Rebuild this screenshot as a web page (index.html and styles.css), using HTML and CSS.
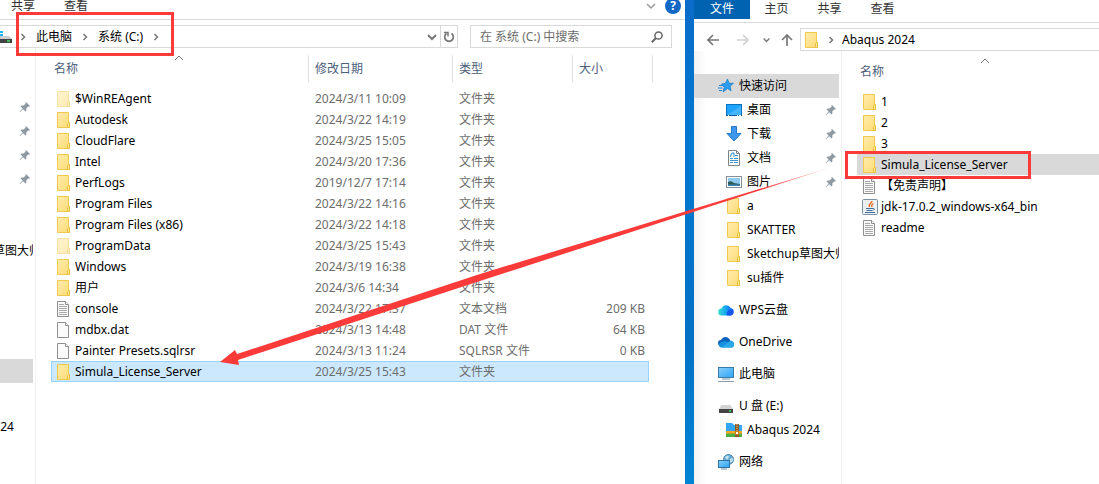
FILE: index.html
```
<!DOCTYPE html>
<html lang="zh-CN">

<head>
  <meta charset="utf-8">
  <title>系统 (C:)</title>
  <link rel="stylesheet" href="styles.css">
</head>

<body>
  <!-- Icon sprite -->
  <svg class="sprite" aria-hidden="true">
    <defs>
      <linearGradient id="gFolder" x1="0" y1="0" x2="1" y2="1">
        <stop offset="0" stop-color="#ffebad" />
        <stop offset="1" stop-color="#fedc74" />
      </linearGradient>
      <linearGradient id="gScreen" x1="0" y1="0" x2="1" y2="1">
        <stop offset="0" stop-color="#8ad0fb" />
        <stop offset="1" stop-color="#2ba3f5" />
      </linearGradient>
      <linearGradient id="gWps" x1="0" y1="0" x2="1" y2="0">
        <stop offset="0" stop-color="#35e0c8" />
        <stop offset="0.5" stop-color="#14a5f5" />
        <stop offset="1" stop-color="#1450f0" />
      </linearGradient>
    </defs>
    <symbol id="folder" viewBox="0 0 16 16">
      <path d="M1.500 .5h11v10h1v5h-12z" fill="url(#gFolder)" stroke="#efca4f" />
      <path d="M11.500 15.500v-4l1-1h1v5z" fill="#ffe698" stroke="#e8be3c" />
    </symbol>
    <symbol id="text" viewBox="0 0 16 16">
      <path d="M1.500 .5h8l3 3v12h-11z" fill="#fafafa" stroke="#8f8f8f" />
      <path d="M9.500 .5v3h3" fill="#fff" stroke="#8f8f8f" />
      <path d="M3 3.500h5M3 5.500h8M3 7.500h8M3 9.500h8M3 11.500h8M3 13.500h8" stroke="#a8a8a8" />
    </symbol>
    <symbol id="file" viewBox="0 0 16 16">
      <path d="M1.500 .5h8l3 3v12h-11z" fill="#fafafa" stroke="#8f8f8f" />
      <path d="M9.500 .5v3h3" fill="#fff" stroke="#8f8f8f" />
    </symbol>
    <symbol id="java" viewBox="0 0 16 16">
      <rect x=".5" y=".5" width="15" height="15" rx="1" fill="#eef1f4" stroke="#7c93a6" />
      <path d="M10 2c0 2-4 2.500-2.500 6M11.500 4.500c-2.500 1-2 2-1.500 3.500" fill="none" stroke="#ee6a22" stroke-width="1.300" />
      <path d="M4 9.500h7M4.500 11.500h6M11 9.500q3 0 0 2M3 13.500h10" fill="none" stroke="#3d6f99" />
    </symbol>
    <symbol id="star" viewBox="0 0 16 16">
      <path d="M9.500 1l1.600 4.200 4.400.1-3.400 2.900 1 4.600-3.600-2.300L5 14l1.200-4.700L3.500 6l3.800-.6z" fill="#2a9df0" stroke="#1479c4" stroke-width=".7" />
      <path d="M1 7.500h4M0 10h4.500M1 12.500h3" stroke="#1b86d6" />
    </symbol>
    <symbol id="desktop" viewBox="0 0 16 16">
      <rect x=".5" y="2.500" width="15" height="11" fill="#1ea3fb" stroke="#0b72bd" />
      <path d="M1 13L15 4v9z" fill="#43b4fd" />
      <path d="M0 13.500h16" stroke="#0a5c9c" />
      <path d="M2 13.500h1M11 13.500h1M13 13.500h2" stroke="#fff" />
    </symbol>
    <symbol id="download" viewBox="0 0 16 16">
      <path d="M5.500 .5h5v7h4.500l-7 7.500-7-7.500h4.500z" fill="#3d98ee" stroke="#2579cb" />
    </symbol>
    <symbol id="docs" viewBox="0 0 16 16">
      <path d="M2.500 .5h8l3 3v12h-11z" fill="#fff" stroke="#7d8489" />
      <path d="M10.500 .5v3h3" fill="none" stroke="#7d8489" />
      <path d="M4 7l2-4h2v4" fill="none" stroke="#2c88cd" />
      <path d="M9 5.500h3M4 8.500h3M8 8.500h4M4 10.500h8M4 12.500h3M8 12.500h4" stroke="#3c93d2" />
    </symbol>
    <symbol id="pictures" viewBox="0 0 16 16">
      <rect x=".5" y="2.500" width="15" height="11" fill="#fff" stroke="#87909a" />
      <path d="M2 4h12v8H2z" fill="#8ec9f2" />
      <path d="M2 8q3-2 6 1l6 1v2H2z" fill="#2f5d58" />
      <path d="M2 10.500h12V12H2z" fill="#3c83b4" />
    </symbol>
    <symbol id="pin" viewBox="0 0 12 12">
      <path d="M7 1l4 4-1 .6-.8-.2-2 2.200.2 2.200-.9.700-2.300-2.300L1 11.300l-.4-.4L3.700 7.500 1.500 5.300l.8-.8 2.200.1 2.100-1.900-.2-1z" fill="#8d99a3" />
    </symbol>
    <symbol id="wps" viewBox="0 0 16 16">
      <path d="M4 13.500a3.500 3.500 0 01-.5-7A5 5 0 0112.700 6a3.800 3.800 0 01-.2 7.500z" fill="url(#gWps)" />
      <path d="M9 13.500c-1-3 1-6 4-6 3 1 3 6-.5 6z" fill="#1459ee" />
    </symbol>
    <symbol id="onedrive" viewBox="0 0 16 16">
      <path d="M3 12a3 3 0 010-6C5 2 10 2 12 6l1 5z" fill="#0c62b8" />
      <path d="M3 13.500a2.700 2.700 0 01-.8-5L6 7l8 2a2.300 2.300 0 010 4.500z" fill="#1490df" />
      <path d="M3 13.500L9.500 9l3-2.500c5 0 4.500 7 1 7z" fill="#28a8ea" />
    </symbol>
    <symbol id="pc" viewBox="0 0 16 16">
      <rect x=".5" y="1.500" width="15" height="10" fill="url(#gScreen)" stroke="#3c7ba6" />
      <path d="M4 13h8" stroke="#7590a1" />
      <path d="M0 15.500h16" stroke="#8b9ca8" />
    </symbol>
    <symbol id="drive" viewBox="0 0 16 16">
      <path d="M3.500 7h9l2.500 4H1z" fill="#d3d3d3" />
      <path d="M1 11h14v4H1z" fill="#444" />
      <path d="M11 13h2" stroke="#3fe05f" stroke-width="1.500" />
    </symbol>
    <symbol id="zip" viewBox="0 0 16 16">
      <path d="M0 1h6l2 2h8v8H0z" fill="#35a7f2" />
      <path d="M0 9h16v3H0z" fill="#f6a623" />
      <path d="M0 11.500h16V15H0z" fill="#52ae43" />
      <path d="M9 2h4v13H9z" fill="#8b5a2b" />
      <path d="M11 2v7" stroke="#f7d98b" stroke-dasharray="1 1" />
      <rect x="9.500" y="9.500" width="3" height="3" fill="#fff" stroke="#c87d10" />
    </symbol>
    <symbol id="network" viewBox="0 0 16 16">
      <circle cx="10.500" cy="5.500" r="5" fill="#69acd2" stroke="#4c8ab0" />
      <path d="M7 3q3-3 4 0l-2 3zM12 5l3-1v3l-3 2z" fill="#c4e1ef" />
      <rect x=".5" y="6.500" width="11" height="7" fill="url(#gScreen)" stroke="#2f72a4" />
      <path d="M3 15h6" stroke="#6f8ea3" />
    </symbol>
    <symbol id="right" viewBox="0 0 6 8">
      <path d="M1.500 1l3 3-3 3" fill="none" stroke="#777" stroke-width="1.500" />
    </symbol>
    <symbol id="down" viewBox="0 0 10 8">
      <path d="M1 2l4 4 4-4" fill="none" stroke="currentColor" stroke-width="2" />
    </symbol>
    <symbol id="sort" viewBox="0 0 10 6">
      <path d="M1 5l4-4 4 4" fill="none" stroke="#777" />
    </symbol>
    <symbol id="back" viewBox="0 0 12 12">
      <path d="M12 6H1M6 1L1 6l5 5" fill="none" stroke="currentColor" stroke-width="1.700" />
    </symbol>
  </svg>

  <main class="desktop">
    <!-- C: drive window -->
    <section class="window window-c">
      <div class="tabs">
        <button class="tab">共享</button>
        <button class="tab">查看</button>
        <svg class="expand" width="10" height="8" viewBox="0 0 10 8">
          <path d="M1 2l4 4 4-4" fill="none" stroke="#9a9a9a" stroke-width="1.500" />
        </svg>
        <button class="help" aria-label="?">?</button>
      </div>

      <div class="toolbar">
        <div class="address">
          <svg class="address-drive" width="12" height="16" viewBox="0 0 12 16">
            <path d="M0 2h3v5H0z" fill="#19b5f1" />
            <path d="M0 4.500h3" stroke="#fff" />
            <path d="M0 7h9l3 3H0z" fill="#c9cdd0" />
            <path d="M0 10h12v4H0z" fill="#444" />
            <path d="M7 12h3" stroke="#3fe05f" stroke-width="1.500" />
          </svg>
          <nav class="crumbs marked">
            <svg width="6" height="8"><use href="#right" /></svg>
            <a href="#">此电脑</a>
            <svg width="6" height="8"><use href="#right" /></svg>
            <a href="#">系统 (C:)</a>
            <svg width="6" height="8"><use href="#right" /></svg>
          </nav>
          <button class="address-btn history"><svg width="10" height="8"><use href="#down" /></svg></button>
          <button class="address-btn refresh">
            <svg width="12" height="12" viewBox="0 0 12 12">
              <path d="M8.500 2.500a4.300 4.300 0 11-5 0" fill="none" stroke="#777" stroke-width="1.700" />
              <path d="M1 1.500H5V5.500" fill="none" stroke="#777" stroke-width="1.500" />
            </svg>
          </button>
        </div>
        <div class="search">
          <input type="text" placeholder="在 系统 (C:) 中搜索" aria-label="在 系统 (C:) 中搜索">
          <svg width="12" height="12" viewBox="0 0 12 12">
            <circle cx="7.500" cy="4.500" r="3.600" fill="none" stroke="#666" stroke-width="1.500" />
            <path d="M5 7L.8 11.200" stroke="#666" stroke-width="2" />
          </svg>
        </div>
      </div>

      <div class="content">
        <div class="side-cut">
          <ul class="nav">
            <li class="nav-item"></li>
            <li class="nav-item sub"><svg class="pin"><use href="#pin" /></svg></li>
            <li class="nav-item sub"><svg class="pin"><use href="#pin" /></svg></li>
            <li class="nav-item sub"><svg class="pin"><use href="#pin" /></svg></li>
            <li class="nav-item sub"><svg class="pin"><use href="#pin" /></svg></li>
            <li class="nav-item sub"></li>
            <li class="nav-item sub"></li>
            <li class="nav-item sub"><svg class="icon"><use href="#folder" /></svg><span>Sketchup草图大师</span></li>
            <li class="nav-item sub"></li>
            <li class="nav-item group"></li>
            <li class="nav-item group"></li>
            <li class="nav-item group active"></li>
            <li class="nav-item group"></li>
            <li class="nav-item sub"><svg class="icon"><use href="#zip" /></svg><span>Abaqus 2024</span></li>
          </ul>
        </div>

        <div class="list">
          <svg class="sort" width="10" height="6"><use href="#sort" /></svg>
          <table class="files">
            <thead>
              <tr>
                <th class="col-name"><div>名称</div></th>
                <th class="col-date"><div>修改日期</div></th>
                <th class="col-type"><div>类型</div></th>
                <th class="col-size"><div>大小</div></th>
              </tr>
            </thead>
            <tbody>
              <tr>
                <td><div class="name"><svg class="icon faded"><use href="#folder" /></svg>$WinREAgent</div></td>
                <td>2024/3/11 10:09</td><td>文件夹</td><td></td>
              </tr>
              <tr>
                <td><div class="name"><svg class="icon"><use href="#folder" /></svg>Autodesk</div></td>
                <td>2024/3/22 14:19</td><td>文件夹</td><td></td>
              </tr>
              <tr>
                <td><div class="name"><svg class="icon"><use href="#folder" /></svg>CloudFlare</div></td>
                <td>2024/3/25 15:05</td><td>文件夹</td><td></td>
              </tr>
              <tr>
                <td><div class="name"><svg class="icon"><use href="#folder" /></svg>Intel</div></td>
                <td>2024/3/20 17:36</td><td>文件夹</td><td></td>
              </tr>
              <tr>
                <td><div class="name"><svg class="icon"><use href="#folder" /></svg>PerfLogs</div></td>
                <td>2019/12/7 17:14</td><td>文件夹</td><td></td>
              </tr>
              <tr>
                <td><div class="name"><svg class="icon"><use href="#folder" /></svg>Program Files</div></td>
                <td>2024/3/22 14:16</td><td>文件夹</td><td></td>
              </tr>
              <tr>
                <td><div class="name"><svg class="icon"><use href="#folder" /></svg>Program Files (x86)</div></td>
                <td>2024/3/22 14:18</td><td>文件夹</td><td></td>
              </tr>
              <tr>
                <td><div class="name"><svg class="icon faded"><use href="#folder" /></svg>ProgramData</div></td>
                <td>2024/3/25 15:43</td><td>文件夹</td><td></td>
              </tr>
              <tr>
                <td><div class="name"><svg class="icon"><use href="#folder" /></svg>Windows</div></td>
                <td>2024/3/19 16:38</td><td>文件夹</td><td></td>
              </tr>
              <tr>
                <td><div class="name"><svg class="icon"><use href="#folder" /></svg>用户</div></td>
                <td>2024/3/6 14:34</td><td>文件夹</td><td></td>
              </tr>
              <tr>
                <td><div class="name"><svg class="icon"><use href="#text" /></svg>console</div></td>
                <td>2024/3/22 17:37</td><td>文本文档</td><td>209 KB</td>
              </tr>
              <tr>
                <td><div class="name"><svg class="icon"><use href="#file" /></svg>mdbx.dat</div></td>
                <td>2024/3/13 14:48</td><td>DAT 文件</td><td>64 KB</td>
              </tr>
              <tr>
                <td><div class="name"><svg class="icon"><use href="#file" /></svg>Painter Presets.sqlrsr</div></td>
                <td>2024/3/13 11:24</td><td>SQLRSR 文件</td><td>0 KB</td>
              </tr>
              <tr class="selected">
                <td><div class="name"><svg class="icon"><use href="#folder" /></svg>Simula_License_Server</div></td>
                <td>2024/3/25 15:43</td><td>文件夹</td><td></td>
              </tr>
            </tbody>
          </table>
        </div>
      </div>
    </section>

    <!-- Abaqus window -->
    <section class="window window-abaqus">
      <div class="tabs">
        <button class="tab tab-file">文件</button>
        <button class="tab">主页</button>
        <button class="tab">共享</button>
        <button class="tab">查看</button>
      </div>

      <div class="toolbar">
        <div class="arrows">
          <button class="arrow" aria-label="后退"><svg width="12" height="12"><use href="#back" /></svg></button>
          <button class="arrow forward" aria-label="前进" disabled><svg width="12" height="12"><use href="#back" /></svg></button>
          <button class="arrow recent" aria-label="最近"><svg width="7" height="6"><use href="#down" /></svg></button>
          <button class="arrow up" aria-label="向上"><svg width="12" height="12"><use href="#back" /></svg></button>
        </div>
        <div class="address">
          <svg class="icon"><use href="#folder" /></svg>
          <svg width="6" height="8"><use href="#right" /></svg>
          <a href="#">Abaqus 2024</a>
        </div>
      </div>

      <div class="content">
        <ul class="nav">
          <li class="nav-item active"><svg class="icon"><use href="#star" /></svg><span>快速访问</span></li>
          <li class="nav-item sub"><svg class="icon"><use href="#desktop" /></svg><span>桌面</span><svg class="pin"><use href="#pin" /></svg></li>
          <li class="nav-item sub"><svg class="icon"><use href="#download" /></svg><span>下载</span><svg class="pin"><use href="#pin" /></svg></li>
          <li class="nav-item sub"><svg class="icon"><use href="#docs" /></svg><span>文档</span><svg class="pin"><use href="#pin" /></svg></li>
          <li class="nav-item sub"><svg class="icon"><use href="#pictures" /></svg><span>图片</span><svg class="pin"><use href="#pin" /></svg></li>
          <li class="nav-item sub"><svg class="icon"><use href="#folder" /></svg><span>a</span></li>
          <li class="nav-item sub"><svg class="icon"><use href="#folder" /></svg><span>SKATTER</span></li>
          <li class="nav-item sub"><svg class="icon"><use href="#folder" /></svg><span>Sketchup草图大师</span></li>
          <li class="nav-item sub"><svg class="icon"><use href="#folder" /></svg><span>su插件</span></li>
          <li class="nav-item group"><svg class="icon"><use href="#wps" /></svg><span>WPS云盘</span></li>
          <li class="nav-item group"><svg class="icon"><use href="#onedrive" /></svg><span>OneDrive</span></li>
          <li class="nav-item group"><svg class="icon"><use href="#pc" /></svg><span>此电脑</span></li>
          <li class="nav-item group"><svg class="icon"><use href="#drive" /></svg><span>U 盘 (E:)</span></li>
          <li class="nav-item sub"><svg class="icon"><use href="#zip" /></svg><span>Abaqus 2024</span></li>
          <li class="nav-item group"><svg class="icon"><use href="#network" /></svg><span>网络</span></li>
        </ul>

        <div class="list">
          <svg class="sort" width="10" height="6"><use href="#sort" /></svg>
          <table class="files">
            <thead>
              <tr><th class="col-name"><div>名称</div></th></tr>
            </thead>
            <tbody>
              <tr><td><div class="name"><svg class="icon"><use href="#folder" /></svg>1</div></td></tr>
              <tr><td><div class="name"><svg class="icon"><use href="#folder" /></svg>2</div></td></tr>
              <tr><td><div class="name"><svg class="icon"><use href="#folder" /></svg>3</div></td></tr>
              <tr class="hover"><td><div class="name marked"><svg class="icon"><use href="#folder" /></svg>Simula_License_Server</div></td></tr>
              <tr><td><div class="name"><svg class="icon"><use href="#text" /></svg>【免责声明】</div></td></tr>
              <tr><td><div class="name"><svg class="icon"><use href="#java" /></svg>jdk-17.0.2_windows-x64_bin</div></td></tr>
              <tr><td><div class="name"><svg class="icon"><use href="#text" /></svg>readme</div></td></tr>
            </tbody>
          </table>
        </div>
      </div>
    </section>

    <!-- Arrow from the source folder to the copied folder -->
    <svg class="copy-arrow" viewBox="0 0 1099 484">
      <defs>
        <linearGradient id="gArrow" gradientUnits="userSpaceOnUse" x1="760" y1="0" x2="832" y2="0">
          <stop offset="0" stop-color="#fb3a3a" />
          <stop offset="1" stop-color="#fb3a3a" stop-opacity=".2" />
        </linearGradient>
      </defs>
      <path d="M220 362L235 350L237 354L480 274L690 210L832 167L690 213L480 281L238 360L239 365Z" fill="url(#gArrow)" />
    </svg>
  </main>
</body>

</html>
```

FILE: styles.css
```
*,
*::after {
  box-sizing: border-box;
}

body {
  margin: 0;
  font-family: "Noto Sans", "Noto Sans CJK SC", sans-serif;
  font-size: 12px;
  line-height: 16px;
  color: #000;
}

button,
input {
  font: inherit;
  color: inherit;
  border: 0;
  padding: 0;
  background: none;
}

a {
  color: inherit;
  text-decoration: none;
}

svg {
  display: block;
  flex: none;
}

.sprite {
  position: absolute;
  width: 0;
  height: 0;
}

.icon {
  width: 16px;
  height: 16px;
}

.faded {
  opacity: 0.55;
}

/* Desktop with the two windows side by side */
.desktop {
  position: relative;
  display: grid;
  grid-template-columns: 685fr 405fr;
  gap: 9px;
  min-height: 100vh;
  overflow: hidden;
  background: linear-gradient(#0a6cc8, #0078d0 30%, #0070c4 70%, #0084d4);
}

.window {
  display: flex;
  flex-direction: column;
  min-width: 0;
  background: #fff;
}

/* Ribbon tabs */
.tabs {
  display: flex;
  border-bottom: 1px solid #dadbdc;
  color: #333;
}

.window-c .tabs {
  height: 20px;
  padding: 0 4px 0 11px;
  gap: 29px;
}

.window-c .tab {
  height: 11px;
  line-height: 11px;
}

.expand {
  margin-top: 2px;
  margin-left: auto;
}

.help {
  width: 16px;
  height: 16px;
  margin-left: -20px;
  margin-top: -2px;
  border-radius: 50%;
  background: #1268c4;
  color: #fff;
  font-weight: bold;
  line-height: 16px;
}

.window-abaqus .tabs {
  height: 23px;
  padding-bottom: 3px;
}

.window-abaqus .tab {
  width: 53px;
  line-height: 16px;
  padding-bottom: 1px;
}

.window-abaqus .tab-file {
  width: 56px;
  background: #0063b1;
  color: #fff;
}

/* Address bar */
.toolbar {
  display: flex;
}

.address {
  display: flex;
  align-items: center;
  flex: 1;
  height: 23px;
  border: 1px solid #d9d9d9;
}

.window-c .toolbar {
  gap: 12px;
  padding: 5px 13px 0 0;
}

.window-c .address {
  border-left: 0;
}

.crumbs {
  position: relative;
  display: flex;
  align-items: center;
  gap: 10px;
  margin-left: 8px;
}

.address-btn {
  display: flex;
  align-items: center;
  justify-content: center;
  width: 17px;
  height: 21px;
  color: #777;
}

.history {
  margin-left: auto;
}

.refresh {
  border-left: 1px solid #d9d9d9;
}

.search {
  display: flex;
  align-items: center;
  width: 202px;
  height: 23px;
  padding: 0 8px 0 9px;
  border: 1px solid #d9d9d9;
}

.search input {
  flex: 1;
  min-width: 0;
  outline: none;
}

.search input::placeholder {
  color: #6d6d6d;
}

.window-abaqus .toolbar {
  padding-top: 5px;
}

.window-abaqus .address {
  gap: 8px;
  padding-left: 3px;
  border-right: 0;
}

.arrows {
  display: flex;
  align-items: center;
  width: 106px;
  padding-left: 13px;
  color: #777;
}

.forward {
  margin-left: 18px;
  color: #d0d0d0;
  transform: scaleX(-1);
}

.recent {
  margin-left: 14px;
}

.up {
  margin-left: 11px;
  transform: rotate(90deg);
}

/* Navigation pane */
.content {
  display: flex;
  flex: 1;
}

.nav {
  flex: none;
  width: 145px;
  margin: 0;
  padding: 0;
  list-style: none;
}

.window-abaqus .nav {
  padding-top: 23px;
  background: linear-gradient(to right, #f2f2f2, #fff 12px);
}

.nav-item {
  display: flex;
  align-items: center;
  gap: 5px;
  height: 24px;
  padding-left: 24px;
  overflow: hidden;
  white-space: nowrap;
}

.nav-item.sub {
  padding-left: 32px;
}

.nav-item.group {
  margin-top: 8px;
}

.nav-item.active {
  background: #d9d9d9;
}

.pin {
  width: 12px;
  height: 12px;
  margin-left: auto;
  margin-right: 2px;
}

/* The pane continues past the left edge of the screen */
.side-cut {
  display: flex;
  justify-content: flex-end;
  width: 33px;
  padding-top: 23px;
  overflow: hidden;
}

/* File list */
.list {
  position: relative;
  flex: 1;
  min-width: 0;
  margin-left: 2px;
  padding-top: 7px;
  padding-left: 15px;
  border-left: 1px solid #f0f0f0;
}

.window-c .list {
  padding-right: 36px;
}

.sort {
  position: absolute;
  top: 7px;
  left: 138px;
}

.files {
  width: 100%;
  table-layout: fixed;
  border-collapse: separate;
  border-spacing: 0;
}

.files th {
  padding: 0 0 6px;
  font-weight: normal;
  text-align: left;
  color: #4c607a;
}

.files th div {
  height: 27px;
  padding-left: 7px;
  line-height: 27px;
}

.files .col-name div {
  padding-left: 3px;
}

.window-c .files th div {
  margin-right: -1px;
  border-right: 1px solid #e0e0e0;
}

.window-c .files .col-size div {
  margin-right: -4px;
}

.col-date {
  width: 144px;
}

.col-type {
  width: 120px;
}

.col-size {
  width: 77px;
}

.files td {
  height: 21px;
  padding: 0 0 0 7px;
  color: #6d6d6d;
  white-space: nowrap;
}

.files td:first-child {
  padding-left: 5px;
  color: #000;
}

.files td:nth-child(4) {
  padding-right: 4px;
  text-align: right;
}

.name {
  position: relative;
  display: flex;
  align-items: center;
  gap: 3px;
}

.selected td {
  background: #cce8ff;
  box-shadow: inset 0 1px #99d1ff, inset 0 -1px #99d1ff;
}

.selected td:first-child {
  box-shadow: inset 1px 1px #99d1ff, inset 0 -1px #99d1ff;
}

.selected td:last-child {
  box-shadow: inset 0 1px #99d1ff, inset -1px -1px #99d1ff;
}

.hover td {
  background: #d9d9d9;
}

/* Red marks */
.marked::after {
  content: "";
  position: absolute;
  z-index: 1;
  border: 3px solid #fb3a3a;
}

.crumbs.marked::after {
  top: -17px;
  left: -4px;
  right: -15px;
  bottom: -11px;
}

.name.marked::after {
  top: -6px;
  left: -17px;
  width: 186px;
  height: 28px;
}

.copy-arrow {
  position: absolute;
  top: 0;
  left: 0;
  width: 100%;
  pointer-events: none;
}
```
